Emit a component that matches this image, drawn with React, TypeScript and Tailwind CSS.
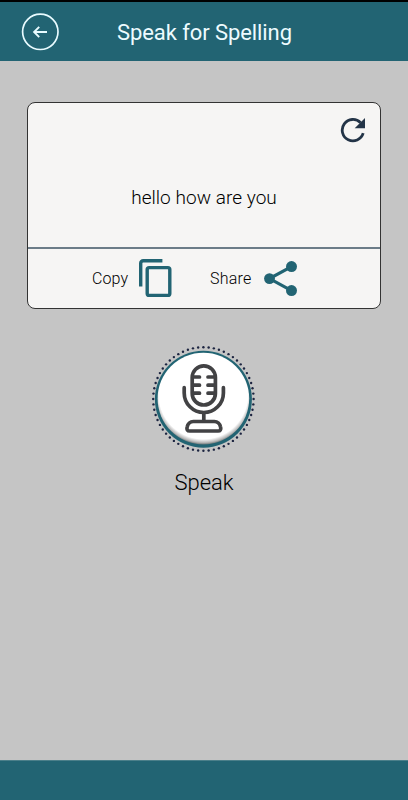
const TEAL = '#226473';

function BackIcon() {
  return (
    <svg width="38" height="38" viewBox="0 0 38 38" fill="none" stroke="#e8fbff">
      <circle cx="19.3" cy="18.8" r="17.7" strokeWidth="1.7" />
      <path d="M26 19H13.2M18.2 13.9L13.1 19l5.1 5.1" strokeWidth="1.9" />
    </svg>
  );
}

function RefreshIcon() {
  return (
    <svg width="26" height="26" viewBox="0 0 26 26">
      <path d="M23.2 16.2A10.7 10.7 0 1 1 20.6 5.7" fill="none" stroke="#233447" strokeWidth="2.8" />
      <path d="M25 1v10.3H14.7z" fill="#233447" />
    </svg>
  );
}

function CopyIcon() {
  return (
    <svg width="33" height="39" viewBox="0 0 33 39" fill="none" stroke={TEAL} strokeWidth="3.4">
      <path d="M1.7 27.4V4.2a2.5 2.5 0 0 1 2.5-2.5h19.2" />
      <rect x="8.2" y="8.6" width="22.6" height="27.8" rx="2" />
    </svg>
  );
}

function ShareIcon() {
  return (
    <svg width="34" height="36" viewBox="0 0 34 36" fill={TEAL}>
      <path d="M27.5 5.6L5.5 17.6l22 12" fill="none" stroke={TEAL} strokeWidth="3.2" />
      <circle cx="27.5" cy="5.6" r="5.5" />
      <circle cx="5.5" cy="17.6" r="5.4" />
      <circle cx="27.5" cy="29.6" r="5.5" />
    </svg>
  );
}

const DOTS = Array.from({ length: 60 }, (_, i) => (i * 2 * Math.PI) / 60);

function MicButton() {
  return (
    <svg width="108" height="108" viewBox="0 0 108 108">
      <defs>
        <radialGradient id="face" cx="53.4" cy="49.5" r="50" gradientUnits="userSpaceOnUse">
          <stop offset="0" stopColor="#fff" />
          <stop offset="0.89" stopColor="#fff" />
          <stop offset="0.96" stopColor="#b9b9b9" />
          <stop offset="1" stopColor="#6d7677" />
        </radialGradient>
      </defs>
      {DOTS.map((a) => (
        <circle key={a} cx={53.4 + 50.2 * Math.cos(a)} cy={54 + 51.8 * Math.sin(a)} r="1.2" fill="#1c2440" />
      ))}
      <circle cx="53.4" cy="54.2" r="48.5" fill={TEAL} />
      <circle cx="53.4" cy="53.6" r="45.8" fill="url(#face)" />
      <g fill="none" stroke="#424244" strokeWidth="3.7" strokeLinecap="round" strokeLinejoin="round">
        <rect x="42.2" y="20.8" width="23.2" height="39.2" rx="11.6" />
        <path d="M43 32h6.5M43 40.2h6.5M43 48.2h6.5M64.5 32H58M64.5 40.2H58M64.5 48.2H58" />
        <path d="M34.2 42.7v5.2a19.6 19.6 0 0 0 39.2 0v-5.2" />
        <path d="M53.8 68v7" strokeLinecap="butt" />
        <path d="M43.4 76.5h20.9c3.2 0 5.6 2.6 6.3 5.6.6 2.3-.4 3.9-2.5 3.9H39.6c-2.1 0-3.1-1.6-2.5-3.9.7-3 3.1-5.6 6.3-5.6z" />
      </g>
    </svg>
  );
}

export default function App() {
  return (
    <div className="flex h-[800px] w-[408px] flex-col overflow-hidden bg-[#c5c5c5] font-['Roboto',sans-serif] text-black">
      <header className="flex h-[61px] items-center border-t-2 border-black bg-[#226473] pl-[21px]">
        <button aria-label="Back">
          <BackIcon />
        </button>
        <h1 className="mt-0.5 ml-[58px] text-[22px] leading-none tracking-[-0.08px] whitespace-nowrap text-[#edfbff]">Speak for Spelling</h1>
      </header>

      <main className="flex flex-1 flex-col items-center pt-[41px]">
        <section className="flex h-[207px] w-[354px] flex-col rounded-lg border border-[#333] bg-[#f6f5f4]">
          <div className="flex h-[144px] flex-col">
            <button aria-label="Clear" className="mt-[14px] mr-[14px] self-end">
              <RefreshIcon />
            </button>
            <p className="mt-[43px] text-center text-[19px] leading-6 font-[350] tracking-[0.04px]">hello how are you</p>
          </div>
          <div className="flex flex-1 items-center border-t-2 border-[#6c7c88] pl-16">
            <button className="flex items-center gap-[10px]">
              <span className="w-[37px] text-left text-base font-[350] tracking-[0.1px]">Copy</span>
              <CopyIcon />
            </button>
            <button className="ml-[38px] flex items-center gap-3">
              <span className="w-[42px] text-left text-base font-[350] tracking-[0.2px]">Share</span>
              <ShareIcon />
            </button>
          </div>
        </section>

        <button className="mt-[36px] flex flex-col items-center">
          <MicButton />
          <span className="mt-4 text-[22px] leading-7 font-[330]">Speak</span>
        </button>
      </main>

      <footer className="h-10 border-t border-[#4b7f8a] bg-[#226473]" />
    </div>
  );
}
